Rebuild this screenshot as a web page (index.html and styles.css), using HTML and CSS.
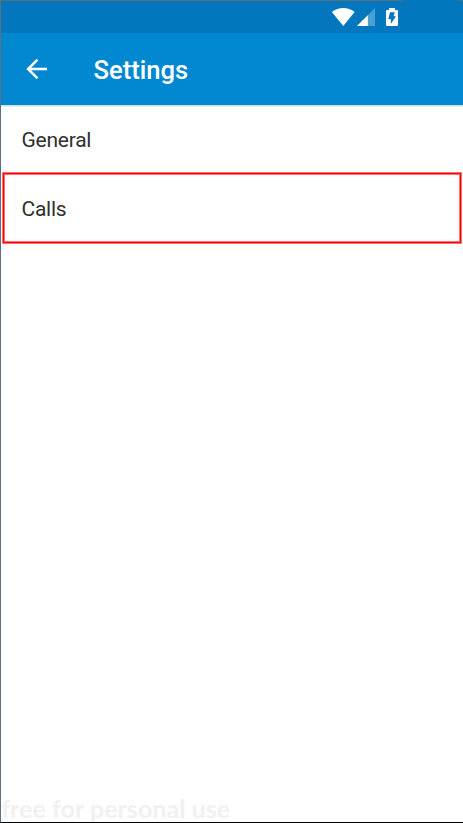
FILE: index.html
```html
<!DOCTYPE html>
<html lang="en">
<head>
<meta charset="utf-8">
<title>Settings</title>
<link rel="stylesheet" href="styles.css">
</head>
<body>
<div class="screen">
  <div class="status">
    <svg class="status-icons" width="70" height="22" viewBox="330 6 70 22" aria-hidden="true">
      <path fill="#fff" d="M343.3 26 331.9 12.1Q337 8 343.3 8T354.6 12.1Z"/>
      <path fill="#4d9fd2" d="M357 26 375 8V26Z"/>
      <path fill="#fff" d="M357 26 367.8 15.2V26Z"/>
      <path fill="#fff" d="M389 8h6v2h2q1 0 1 1v14q0 1-1 1h-10q-1 0-1-1v-14q0-1 1-1h2Z"/>
      <path fill="#0277bd" d="M390 12.3h4.8l-1.2 4h2.4l-5.2 7.8v-5.2h-2.5Z"/>
    </svg>
  </div>
  <header class="bar">
    <svg class="back" width="22" height="22" viewBox="0 0 22 22" aria-hidden="true">
      <path d="M21 11H2M11.5 1.6 2.1 11l9.4 9.4" fill="none" stroke="#fff" stroke-width="2.5"/>
    </svg>
    <h1 class="title">Settings</h1>
  </header>
  <main class="list">
    <div class="item">General</div>
    <div class="item selected">Calls</div>
  </main>
  <footer class="note">free for personal use</footer>
</div>
</body>
</html>
```
FILE: styles.css
```css
* { box-sizing: border-box; }
body { margin: 0; background: #fff; }
.screen {
  width: 463px;
  height: 823px;
  display: flex;
  flex-direction: column;
  border-left: 1px solid #5f6f80;
  border-bottom: 1px solid #000;
  background: #fff;
  font-family: Roboto, sans-serif;
  overflow: hidden;
}
.status {
  height: 33px;
  flex: none;
  padding: 6px 0 0 329px;
  background: linear-gradient(90deg, #576e80 402px, #0277bd 402px 458px, #576e80 458px) 0 0 / 100% 1px no-repeat #0277bd;
}
.status-icons { display: block; }
.bar {
  height: 72px;
  flex: none;
  display: flex;
  align-items: center;
  padding-left: 25px;
  background: #0288d1;
}
.back { flex: none; }
.title {
  margin: 2px 0 0 45.5px;
  font-size: 25.6px;
  line-height: 32px;
  font-weight: 500;
  color: #fff;
}
.list {
  flex: 1;
  border-top: 1px solid #ccdbe3;
  box-shadow: inset 0 1px 0 #eee;
}
.item {
  height: 66px;
  padding: 2px 0 0 20.5px;
  font-size: 21px;
  line-height: 65px;
  letter-spacing: -0.25px;
  color: #303030;
}
.selected {
  height: 72px;
  margin: 0 1px;
  padding: 1px 0 0 18.5px;
  border: 1px solid #ff7070;
  outline: 1px solid #f00;
  outline-offset: -2px;
  box-shadow: inset 0 0 0 2px #ff7070;
  line-height: 70px;
}
.note {
  flex: none;
  height: 30px;
  font: 700 25.1px/32px Lato, sans-serif;
  color: #f1f1f1;
  white-space: nowrap;
}
```
